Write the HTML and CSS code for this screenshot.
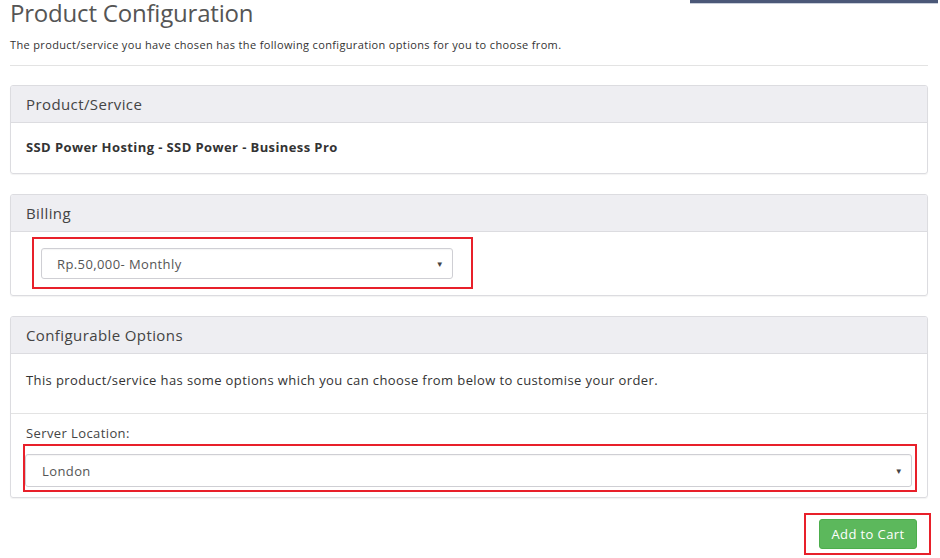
FILE: index.html
```html
<!DOCTYPE html>
<html>
<head>
<meta charset="utf-8">
<link rel="stylesheet" href="styles.css">
</head>
<body>
<div class="topbar"></div>
<div class="page">
  <h1 class="title">Product Configuration</h1>
  <p class="lead">The product/service you have chosen has the following configuration options for you to choose from.</p>
  <hr class="rule">

  <div class="panel">
    <div class="panel-head">Product/Service</div>
    <div class="panel-body product">SSD Power Hosting - SSD Power - Business Pro</div>
  </div>

  <div class="panel">
    <div class="panel-head">Billing</div>
    <div class="panel-body billing">
      <div class="mark mark-billing">
        <div class="select select-billing"><span>Rp.50,000- Monthly</span><span class="caret">▼</span></div>
      </div>
    </div>
  </div>

  <div class="panel">
    <div class="panel-head">Configurable Options</div>
    <div class="panel-body intro">This product/service has some options which you can choose from below to customise your order.</div>
    <div class="panel-body options">
      <div class="label">Server Location:</div>
      <div class="mark mark-location">
        <div class="select select-location"><span>London</span><span class="caret">▼</span></div>
      </div>
    </div>
  </div>

  <div class="actions">
    <div class="mark mark-btn">
      <button class="btn">Add to Cart</button>
    </div>
  </div>
</div>
</body>
</html>
```
FILE: styles.css
```css
* { box-sizing: border-box; }
html, body { margin: 0; padding: 0; background: #fff; }
body {
  font-family: "Open Sans", "Liberation Sans", sans-serif;
  color: #333;
  position: relative;
  width: 940px;
  height: 558px;
  overflow: hidden;
}
.topbar {
  position: absolute;
  top: 0;
  left: 690px;
  width: 248px;
  height: 4px;
  background: #4b5878;
  border-bottom: 1px solid #c9cfdb;
}
.page {
  padding: 0 12px 0 10px;
}
.title {
  margin: -1px 0 0 0;
  font-size: 24px;
  line-height: 28px;
  font-weight: 400;
  color: #555;
  letter-spacing: -0.2px;
}
.lead {
  margin: 11px 0 0 0;
  font-size: 11px;
  line-height: 14px;
  color: #333;
  letter-spacing: 0.35px;
}
.rule {
  margin: 13px 0 19px 0;
  border: 0;
  border-top: 1px solid #e3e3e3;
  height: 0;
}
.panel {
  border: 1px solid #dcdce0;
  border-radius: 3px;
  margin-bottom: 20px;
  box-shadow: 0 1px 1px rgba(0,0,0,0.05);
  overflow: hidden;
}
.panel-head {
  background: #eeeef2;
  border-bottom: 1px solid #dcdce0;
  height: 37px;
  padding: 0 15px;
  font-size: 15px;
  line-height: 36px;
  color: #444;
  letter-spacing: 0.4px;
}
.panel-body {
  padding: 0 15px;
}
.product {
  height: 50px;
  line-height: 48px;
  font-size: 13px;
  font-weight: 700;
  color: #333;
  letter-spacing: 0.4px;
}
.billing {
  height: 63px;
  padding: 5px 0 0 21px;
}
.mark {
  border: 2px solid #e8202a;
}
.mark-billing {
  width: 441px;
  height: 52px;
  padding: 9px 18px 0 7px;
}
.select {
  display: flex;
  justify-content: space-between;
  align-items: center;
  border: 1px solid #cfcfd4;
  border-radius: 3px;
  background: #fff;
  font-size: 13px;
  color: #555;
  padding: 0 8px 0 15px;
  box-shadow: inset 0 1px 1px rgba(0,0,0,0.04);
  letter-spacing: 0.4px;
}
.select-billing {
  height: 31px;
}
.caret {
  font-size: 8px;
  color: #444;
}
.intro {
  height: 60px;
  line-height: 52px;
  font-size: 13px;
  color: #333;
  border-bottom: 1px solid #e3e3e3;
  letter-spacing: 0.4px;
}
.options {
  padding: 11px 10px 5px 12px;
}
.label {
  font-size: 13px;
  line-height: 16px;
  color: #444;
  padding-left: 3px;
  letter-spacing: 0.4px;
}
.mark-location {
  margin-top: 3px;
  height: 48px;
  padding: 8px 3px 0 0;
}
.select-location {
  height: 33px;
  padding-left: 16px;
}
.actions {
  display: flex;
  justify-content: flex-end;
  margin-top: -5px;
  margin-right: -3px;
}
.mark-btn {
  width: 127px;
  height: 42px;
  padding: 4px 12px 0 13px;
}
.btn {
  display: block;
  width: 98px;
  height: 30px;
  border: 1px solid #4cae4c;
  border-radius: 3px;
  background: #5cb85c;
  color: #fff;
  font-family: "Open Sans", "Liberation Sans", sans-serif;
  font-size: 13px;
  letter-spacing: 0.4px;
  padding: 0;
}
```
